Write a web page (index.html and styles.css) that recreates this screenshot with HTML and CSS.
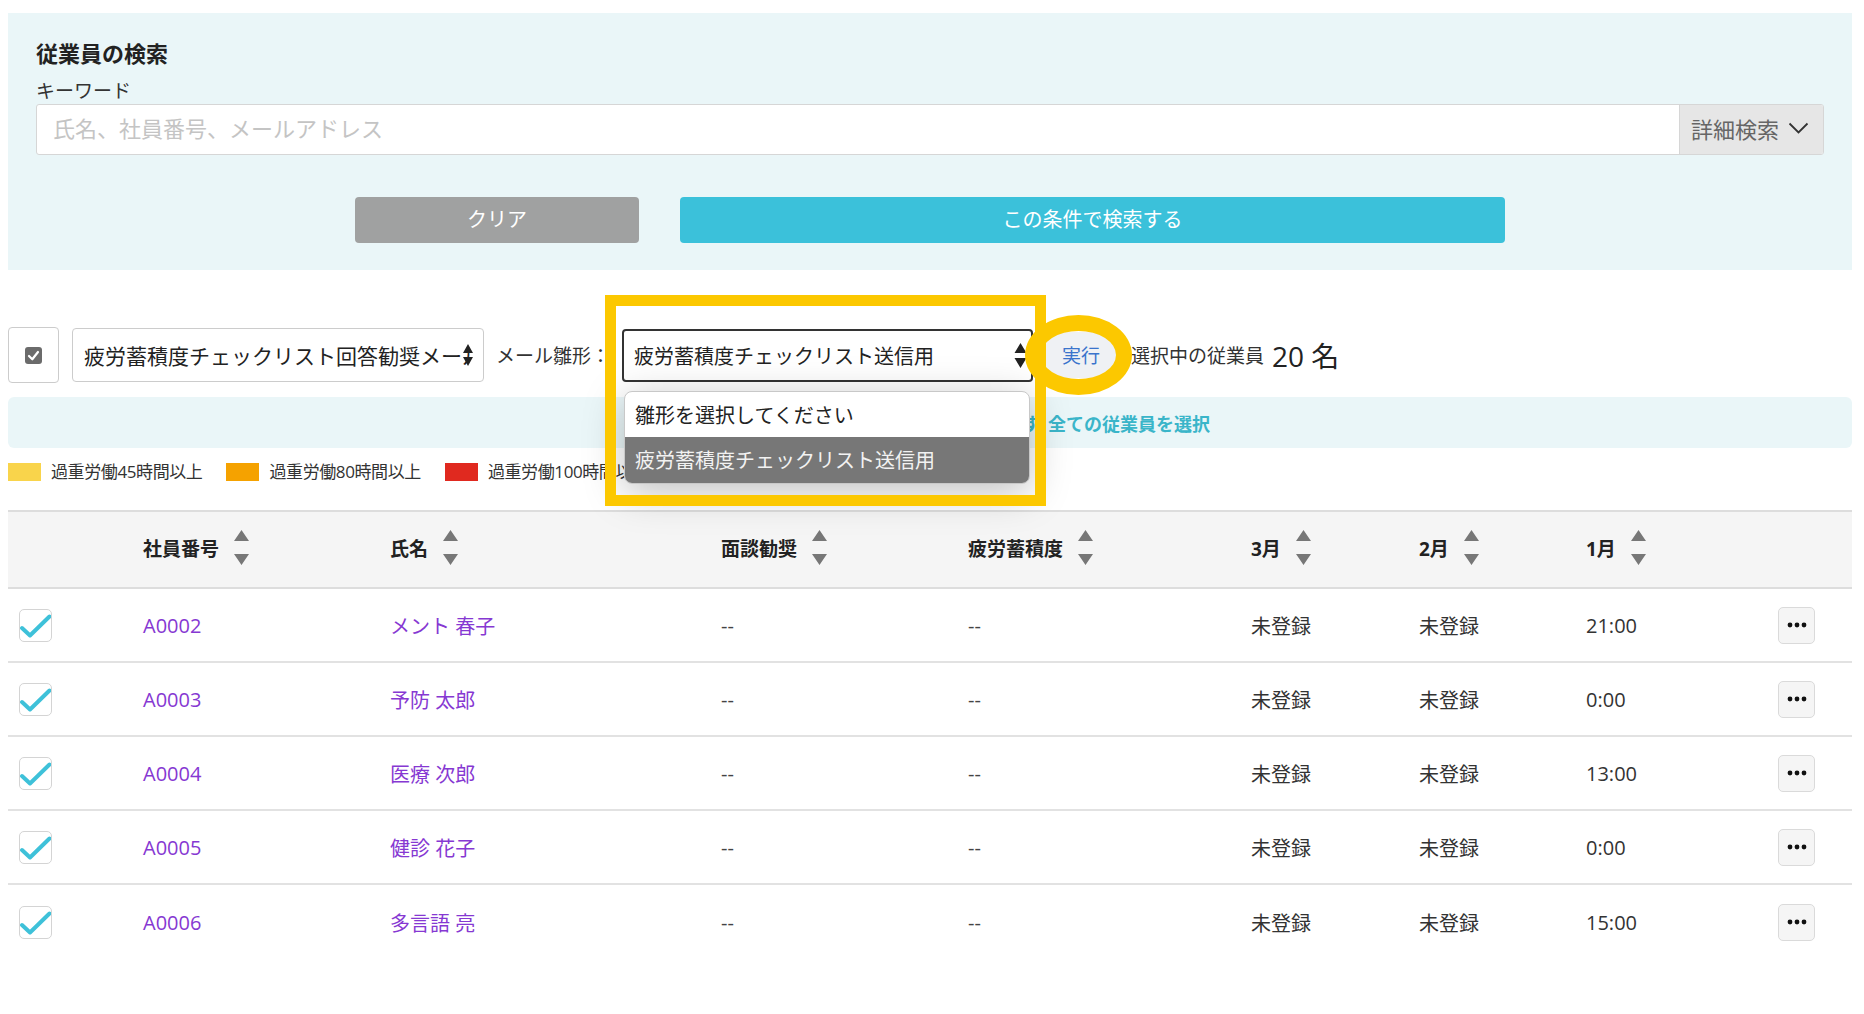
FILE: index.html
```html
<!DOCTYPE html>
<html lang="ja">
<head>
<meta charset="utf-8">
<title>従業員の検索</title>
<link rel="stylesheet" href="styles.css">
</head>
<body>
<div class="page">
  <section class="search-panel">
    <h2 class="panel-title">従業員の検索</h2>
    <label class="field-label">キーワード</label>
    <div class="input-group">
      <input class="keyword" type="text" placeholder="氏名、社員番号、メールアドレス">
      <button class="addon">詳細検索<svg width="21" height="12" viewBox="0 0 21 12"><path d="M1.5 1.5L10.5 10.5L19.5 1.5" fill="none" stroke="#333" stroke-width="1.8"/></svg></button>
    </div>
    <div class="panel-actions">
      <button class="btn btn-clear">クリア</button>
      <button class="btn btn-search">この条件で検索する</button>
    </div>
  </section>

  <div class="toolbar">
    <div class="bulk-check">
      <span class="mini-check"><svg width="17" height="17" viewBox="0 0 17 17"><path d="M4 9L7.3 12.3L13 5" fill="none" stroke="#fff" stroke-width="2.2" stroke-linecap="round" stroke-linejoin="round"/></svg></span>
    </div>
    <div class="select select-1">
      <span class="select-text">疲労蓄積度チェックリスト回答勧奨メール</span>
      <svg class="select-arrows" width="12" height="24" viewBox="0 0 12 24"><path d="M6 1L11 10H1Z M1 14H11L6 23Z" fill="#222"/></svg>
    </div>
    <span class="tool-label">メール雛形：</span>
    <div class="select select-2">
      <span class="select-text">疲労蓄積度チェックリスト送信用</span>
      <svg class="select-arrows" width="13" height="25" viewBox="0 0 13 25"><path d="M6.5 0L12.5 10H0.5Z M0.5 15H12.5L6.5 25Z" fill="#222"/></svg>
      <ul class="dropdown">
        <li class="dd-item">雛形を選択してください</li>
        <li class="dd-item dd-active">疲労蓄積度チェックリスト送信用</li>
      </ul>
    </div>
    <button class="btn-run">実行</button>
    <span class="selected-label">選択中の従業員</span>
    <span class="selected-count">20 名</span>
  </div>

  <div class="select-all-bar">
    <span class="bar-note">選択されています</span>
    <a class="bar-link">全ての従業員を選択</a>
  </div>

  <div class="legend">
    <span class="legend-item"><i class="swatch sw-yellow"></i>過重労働45時間以上</span>
    <span class="legend-item"><i class="swatch sw-orange"></i>過重労働80時間以上</span>
    <span class="legend-item"><i class="swatch sw-red"></i>過重労働100時間以上</span>
  </div>

  <div class="table">
    <div class="t-row t-head">
      <div></div>
      <div class="th">社員番号<svg class="sort" width="15" height="35" viewBox="0 0 15 35"><path d="M7.5 0L15 11H0Z M0 24H15L7.5 35Z" fill="#777"/></svg></div>
      <div class="th">氏名<svg class="sort" width="15" height="35" viewBox="0 0 15 35"><path d="M7.5 0L15 11H0Z M0 24H15L7.5 35Z" fill="#777"/></svg></div>
      <div class="th">面談勧奨<svg class="sort" width="15" height="35" viewBox="0 0 15 35"><path d="M7.5 0L15 11H0Z M0 24H15L7.5 35Z" fill="#777"/></svg></div>
      <div class="th">疲労蓄積度<svg class="sort" width="15" height="35" viewBox="0 0 15 35"><path d="M7.5 0L15 11H0Z M0 24H15L7.5 35Z" fill="#777"/></svg></div>
      <div class="th">3月<svg class="sort" width="15" height="35" viewBox="0 0 15 35"><path d="M7.5 0L15 11H0Z M0 24H15L7.5 35Z" fill="#777"/></svg></div>
      <div class="th">2月<svg class="sort" width="15" height="35" viewBox="0 0 15 35"><path d="M7.5 0L15 11H0Z M0 24H15L7.5 35Z" fill="#777"/></svg></div>
      <div class="th">1月<svg class="sort" width="15" height="35" viewBox="0 0 15 35"><path d="M7.5 0L15 11H0Z M0 24H15L7.5 35Z" fill="#777"/></svg></div>
      <div></div>
    </div>

    <div class="t-row">
      <div class="cb-cell"><span class="row-check"><svg width="32" height="32" viewBox="0 0 32 32"><path d="M3 20L11 27.5L30.5 8.5" fill="none" stroke="#3ec1d9" stroke-width="4" stroke-linecap="round" stroke-linejoin="round"/></svg></span></div>
      <div><a class="link">A0002</a></div>
      <div><a class="link">メント 春子</a></div>
      <div class="dash">--</div>
      <div class="dash">--</div>
      <div>未登録</div>
      <div>未登録</div>
      <div>21:00</div>
      <div><button class="more"><svg width="20" height="6" viewBox="0 0 20 6"><circle cx="3" cy="3" r="2.4"/><circle cx="10" cy="3" r="2.4"/><circle cx="17" cy="3" r="2.4"/></svg></button></div>
    </div>

    <div class="t-row">
      <div class="cb-cell"><span class="row-check"><svg width="32" height="32" viewBox="0 0 32 32"><path d="M3 20L11 27.5L30.5 8.5" fill="none" stroke="#3ec1d9" stroke-width="4" stroke-linecap="round" stroke-linejoin="round"/></svg></span></div>
      <div><a class="link">A0003</a></div>
      <div><a class="link">予防 太郎</a></div>
      <div class="dash">--</div>
      <div class="dash">--</div>
      <div>未登録</div>
      <div>未登録</div>
      <div>0:00</div>
      <div><button class="more"><svg width="20" height="6" viewBox="0 0 20 6"><circle cx="3" cy="3" r="2.4"/><circle cx="10" cy="3" r="2.4"/><circle cx="17" cy="3" r="2.4"/></svg></button></div>
    </div>

    <div class="t-row">
      <div class="cb-cell"><span class="row-check"><svg width="32" height="32" viewBox="0 0 32 32"><path d="M3 20L11 27.5L30.5 8.5" fill="none" stroke="#3ec1d9" stroke-width="4" stroke-linecap="round" stroke-linejoin="round"/></svg></span></div>
      <div><a class="link">A0004</a></div>
      <div><a class="link">医療 次郎</a></div>
      <div class="dash">--</div>
      <div class="dash">--</div>
      <div>未登録</div>
      <div>未登録</div>
      <div>13:00</div>
      <div><button class="more"><svg width="20" height="6" viewBox="0 0 20 6"><circle cx="3" cy="3" r="2.4"/><circle cx="10" cy="3" r="2.4"/><circle cx="17" cy="3" r="2.4"/></svg></button></div>
    </div>

    <div class="t-row">
      <div class="cb-cell"><span class="row-check"><svg width="32" height="32" viewBox="0 0 32 32"><path d="M3 20L11 27.5L30.5 8.5" fill="none" stroke="#3ec1d9" stroke-width="4" stroke-linecap="round" stroke-linejoin="round"/></svg></span></div>
      <div><a class="link">A0005</a></div>
      <div><a class="link">健診 花子</a></div>
      <div class="dash">--</div>
      <div class="dash">--</div>
      <div>未登録</div>
      <div>未登録</div>
      <div>0:00</div>
      <div><button class="more"><svg width="20" height="6" viewBox="0 0 20 6"><circle cx="3" cy="3" r="2.4"/><circle cx="10" cy="3" r="2.4"/><circle cx="17" cy="3" r="2.4"/></svg></button></div>
    </div>

    <div class="t-row t-last">
      <div class="cb-cell"><span class="row-check"><svg width="32" height="32" viewBox="0 0 32 32"><path d="M3 20L11 27.5L30.5 8.5" fill="none" stroke="#3ec1d9" stroke-width="4" stroke-linecap="round" stroke-linejoin="round"/></svg></span></div>
      <div><a class="link">A0006</a></div>
      <div><a class="link">多言語 亮</a></div>
      <div class="dash">--</div>
      <div class="dash">--</div>
      <div>未登録</div>
      <div>未登録</div>
      <div>15:00</div>
      <div><button class="more"><svg width="20" height="6" viewBox="0 0 20 6"><circle cx="3" cy="3" r="2.4"/><circle cx="10" cy="3" r="2.4"/><circle cx="17" cy="3" r="2.4"/></svg></button></div>
    </div>
  </div>

  <div class="hl-rect"></div>
  <div class="hl-circle"></div>
</div>
</body>
</html>
```

FILE: styles.css
```css
* { box-sizing: border-box; }

body {
  margin: 0;
  background: #fff;
  color: #333;
  font-family: "Open Sans", "Noto Sans CJK JP", sans-serif;
}

.page {
  position: relative;
  padding: 13px 12px 0 8px;
}

/* search panel */
.search-panel {
  background: #eaf6f8;
  height: 257px;
  padding: 25px 28px 0 28px;
}
.panel-title {
  margin: 0;
  font-size: 22px;
  line-height: 30px;
  font-weight: 700;
  color: #222;
}
.field-label {
  display: block;
  margin-top: 10px;
  font-size: 19px;
  line-height: 26px;
  color: #333;
}
.input-group {
  display: flex;
  height: 51px;
  border: 1px solid #d6d6d6;
  border-radius: 3px;
  background: #fff;
  overflow: hidden;
}
.keyword {
  flex: 1;
  border: none;
  outline: none;
  background: transparent;
  padding: 0 16px 3px;
  font-family: "Open Sans", "Noto Sans CJK JP", sans-serif;
  font-size: 22px;
  color: #333;
}
.keyword::placeholder { color: #c4c4c4; }
.addon {
  width: 144px;
  display: flex;
  align-items: center;
  gap: 9px;
  padding: 0 12px 3px 11px;
  border: none;
  border-left: 1px solid #d6d6d6;
  background: #e6e6e6;
  font-family: inherit;
  font-size: 22px;
  color: #666;
}
.panel-actions {
  display: flex;
  justify-content: center;
  gap: 41px;
  margin-top: 42px;
}
.btn {
  height: 46px;
  padding: 0 0 4px;
  border: none;
  border-radius: 4px;
  color: #fff;
  font-family: inherit;
  font-size: 20px;
}
.btn-clear { width: 284px; background: #a0a1a1; }
.btn-search { width: 825px; background: #3bc1da; }

/* toolbar */
.toolbar {
  display: flex;
  align-items: center;
  height: 56px;
  margin-top: 57px;
}
.bulk-check {
  width: 51px;
  height: 56px;
  border: 1px solid #ccc;
  border-radius: 4px;
  background: #fff;
  display: flex;
  align-items: center;
  justify-content: center;
}
.mini-check {
  width: 17px;
  height: 17px;
  border-radius: 3px;
  background: #6b6b6b;
  display: flex;
}
.select {
  position: relative;
  display: flex;
  align-items: center;
  background: #fff;
  color: #222;
}
.select-text {
  flex: 1;
  white-space: nowrap;
  overflow: hidden;
}
.select-1 {
  width: 412px;
  height: 54px;
  margin-left: 13px;
  border: 1px solid #ccc;
  border-radius: 4px;
  padding: 0 9px 0 11px;
  font-size: 21px;
}
.select-1 .select-arrows { margin-left: -8px; }
.select-2 {
  width: 411px;
  height: 53px;
  margin-left: 12px;
  border: 2px solid #333;
  border-radius: 4px;
  padding: 0 4px 0 10px;
  font-size: 20px;
}
.tool-label {
  margin-left: 12px;
  font-size: 19px;
  color: #333;
}
.dropdown {
  position: absolute;
  left: 0;
  top: 60px;
  width: 406px;
  margin: 0;
  padding: 0;
  list-style: none;
  background: #fff;
  border: 1px solid #c8c8c8;
  border-radius: 8px;
  overflow: hidden;
  box-shadow: 0 8px 40px rgba(0, 0, 0, 0.25);
  z-index: 5;
}
.dd-item {
  height: 45px;
  display: flex;
  align-items: center;
  padding-left: 10px;
  font-size: 20px;
  color: #222;
}
.dd-active {
  height: 46px;
  background: #777;
  color: #f2f2f2;
}
.btn-run {
  margin-left: 12px;
  width: 72px;
  height: 46px;
  border: none;
  border-radius: 4px;
  background: #eff1f4;
  color: #3a74cc;
  font-family: inherit;
  font-size: 19px;
}
.selected-label {
  margin-left: 14px;
  font-size: 19px;
  color: #333;
}
.selected-count {
  margin-left: 8px;
  font-size: 28px;
  color: #222;
}

/* select all bar */
.select-all-bar {
  display: flex;
  align-items: center;
  height: 51px;
  margin-top: 14px;
  background: #eaf6f8;
  border-radius: 6px;
}
.bar-note {
  width: 1032px;
  text-align: right;
  font-size: 18px;
  font-weight: 700;
  color: #3ab5c9;
  white-space: nowrap;
  overflow: hidden;
}
.bar-link {
  margin-left: 8px;
  font-size: 18px;
  font-weight: 700;
  color: #3ab5c9;
}

/* legend */
.legend {
  display: flex;
  gap: 24px;
  height: 24px;
  margin-top: 12px;
}
.legend-item {
  display: flex;
  align-items: center;
  font-size: 17px;
  letter-spacing: -0.4px;
  line-height: 24px;
  color: #333;
}
.swatch {
  width: 33px;
  height: 18px;
  margin-right: 10px;
}
.sw-yellow { background: #f9d44b; }
.sw-orange { background: #f5a200; }
.sw-red { background: #e0291f; }

/* table */
.table { margin-top: 26px; }
.t-row {
  display: grid;
  grid-template-columns: 135px 247px 331px 247px 283px 168px 167px 192px 74px;
  align-items: center;
  height: 74px;
  border-bottom: 2px solid #e2e2e2;
  font-size: 20px;
  color: #333;
}
.t-last { border-bottom: none; }
.t-head {
  height: 79px;
  background: #f5f5f5;
  border-top: 2px solid #ddd;
  border-bottom: 2px solid #ddd;
  padding-bottom: 4px;
}
.th {
  display: flex;
  align-items: center;
  gap: 15px;
  font-size: 19px;
  font-weight: 700;
  color: #222;
}
.cb-cell { padding-left: 11px; }
.row-check {
  display: block;
  width: 33px;
  height: 33px;
  border: 1.5px solid #d4d4d4;
  border-radius: 5px;
  background: #fff;
}
.row-check svg { display: block; margin: -1.5px 0 0 -1.5px; }
.link { color: #8638d2; }
.dash { color: #444; }
.more {
  width: 37px;
  height: 37px;
  padding: 0;
  border: 1.5px solid #dadada;
  border-radius: 5px;
  background: #f5f5f5;
  display: flex;
  align-items: center;
  justify-content: center;
}
.more svg { fill: #111; }

/* annotation highlights */
.hl-rect {
  position: absolute;
  left: 605px;
  top: 295px;
  width: 441px;
  height: 211px;
  border: 11px solid #fcc800;
  z-index: 10;
}
.hl-circle {
  position: absolute;
  left: 1025px;
  top: 315px;
  width: 107px;
  height: 80px;
  border: 16px solid #fcc800;
  border-radius: 50%;
  z-index: 10;
}
```
